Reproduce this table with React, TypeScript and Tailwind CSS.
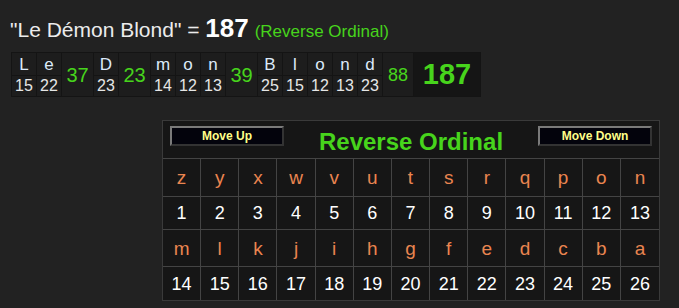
import React from "react";

type Part = { ch: string; v: number } | { sum: number };

const breakdown: Part[] = [
  { ch: "L", v: 15 },
  { ch: "e", v: 22 },
  { sum: 37 },
  { ch: "D", v: 23 },
  { sum: 23 },
  { ch: "m", v: 14 },
  { ch: "o", v: 12 },
  { ch: "n", v: 13 },
  { sum: 39 },
  { ch: "B", v: 25 },
  { ch: "l", v: 15 },
  { ch: "o", v: 12 },
  { ch: "n", v: 13 },
  { ch: "d", v: 23 },
  { sum: 88 },
];

const letters = "zyxwvutsrqponmlkjihgfedcba".split("");

const Breakdown = () => (
  <div className="ml-[11px] mt-[8px] inline-flex gap-px bg-[#141414] p-px">
    {breakdown.map((p, i) =>
      "ch" in p ? (
        <div key={i} className="flex w-[24px] flex-col gap-px">
          <div className="flex h-[22px] items-center justify-center bg-[#1d1d1d] text-[17px] leading-none text-[#dceafa]">
            {p.ch}
          </div>
          <div className="flex h-[20px] items-center justify-center bg-[#1d1d1d] text-[16px] leading-none text-[#e6e6e6]">
            {p.v}
          </div>
        </div>
      ) : (
        <div
          key={i}
          className={`flex items-center justify-center bg-[#1d1d1d] leading-none text-[#47d41c] ${
            p.sum > 80 ? "w-[30px] text-[18px]" : "w-[31px] text-[20px]"
          }`}
        >
          {p.sum}
        </div>
      )
    )}
    <div className="flex w-[66px] items-center justify-center bg-[#151515] text-[29px] font-bold leading-none text-[#47d41c]">
      187
    </div>
  </div>
);

const NavButton = ({ label }: { label: string }) => (
  <button className="flex h-[20px] w-[114px] items-center justify-center border-2 border-b-[#333] border-l-[#7a7a7a] border-r-[#333] border-t-[#7a7a7a] bg-[#03030c] text-[12px] font-bold leading-none text-[#ffff88]">
    {label}
  </button>
);

const CipherChart = () => (
  <div className="ml-[162px] mt-[23px] w-[498px] border border-[#3a3a3a] bg-[#161616]">
    <div className="flex h-[38px] items-start justify-between border-b border-[#444] px-[7px] pt-[5px]">
      <NavButton label="Move Up" />
      <span className="self-center text-[24px] font-bold leading-none text-[#47d41c]">
        Reverse Ordinal
      </span>
      <NavButton label="Move Down" />
    </div>
    {[0, 1].map((half) => (
      <div key={half}>
        <div className="grid grid-cols-[repeat(13,minmax(0,1fr))]">
          {letters.slice(half * 13, half * 13 + 13).map((l, i) => (
            <div
              key={l}
              className={`flex items-center justify-center border-b border-[#444] text-[19px] leading-none text-[#ea8550] ${
                half === 0 ? "h-[38px]" : "h-[37px]"
              } ${i < 12 ? "border-r" : ""}`}
            >
              {l}
            </div>
          ))}
        </div>
        <div className="grid grid-cols-[repeat(13,minmax(0,1fr))]">
          {letters.slice(half * 13, half * 13 + 13).map((_, i) => (
            <div
              key={i}
              className={`flex h-[33px] items-center justify-center border-[#444] text-[18px] leading-none text-white ${
                i < 12 ? "border-r" : ""
              } ${half === 0 ? "border-b" : ""}`}
            >
              {half * 13 + i + 1}
            </div>
          ))}
        </div>
      </div>
    ))}
  </div>
);

export default function App() {
  return (
    <div className="h-[308px] w-[679px] overflow-hidden bg-[#222222] font-['Liberation_Sans',Arial,sans-serif]">
      <div className="flex items-baseline pl-[10px] pt-[16px] text-[21px] leading-[25px] text-[#ececec]">
        <span className="whitespace-pre">"Le Démon Blond" = </span>
        <span className="text-[26px] font-bold text-white">187</span>
        <span className="ml-[6px] text-[17px] text-[#47d41c]">(Reverse Ordinal)</span>
      </div>
      <Breakdown />
      <CipherChart />
    </div>
  );
}
